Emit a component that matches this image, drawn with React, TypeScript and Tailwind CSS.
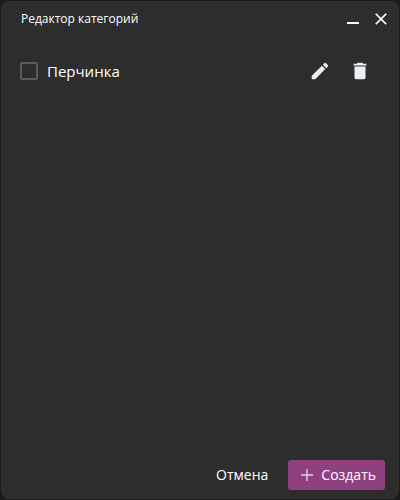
import { useState } from 'react';
import { MdClose, MdDelete, MdEdit } from 'react-icons/md';

const categories = [{ id: 'perchinka', name: 'Перчинка' }];

function TitleBar() {
  return (
    <header className="flex h-9 items-center justify-between pr-2 pl-5">
      <h1 className="text-[12px] leading-4 font-normal">Редактор категорий</h1>
      <div className="flex items-center gap-2">
        <button type="button" aria-label="Свернуть" className="flex h-5 w-5 items-center justify-center pt-2">
          <span className="h-[2px] w-3 bg-white" />
        </button>
        <button type="button" aria-label="Закрыть" className="flex h-5 w-5 items-center justify-center">
          <MdClose size={20} className="shrink-0" />
        </button>
      </div>
    </header>
  );
}

function CategoryRow({ id, name }: { id: string; name: string }) {
  const [checked, setChecked] = useState(false);
  return (
    <li className="flex h-10 items-center">
      <input
        id={id}
        type="checkbox"
        checked={checked}
        onChange={(event) => setChecked(event.target.checked)}
        className="h-[18px] w-[18px] shrink-0 appearance-none rounded-xs border-2 border-[#5a5a5a] checked:bg-[#8e407f]"
      />
      <label htmlFor={id} className="flex-1 pl-[9px] text-[15px] leading-5">
        {name}
      </label>
      <button type="button" aria-label="Изменить" className="flex h-10 w-10 items-center justify-center text-[#eceff1]">
        <MdEdit size={22} />
      </button>
      <button type="button" aria-label="Удалить" className="flex h-10 w-10 items-center justify-center text-[#eceff1]">
        <MdDelete size={22} />
      </button>
    </li>
  );
}

export default function App() {
  return (
    <div className="flex h-screen bg-[#1a1a1a] p-px font-['Open_Sans','Noto_Sans',sans-serif] text-white">
      <main className="flex flex-1 flex-col rounded-lg bg-[#2d2d2d]">
        <TitleBar />
        <ul className="flex-1 pt-[14px] pr-[19px] pl-[19px]">
          {categories.map((category) => (
            <CategoryRow key={category.id} {...category} />
          ))}
        </ul>
        <footer className="flex justify-end gap-2 pr-[14px] pb-[9px]">
          <button type="button" className="h-[30px] px-3 text-[14px] leading-5">
            Отмена
          </button>
          <button
            type="button"
            className="flex h-[30px] items-center gap-2 rounded-[3px] bg-[#8e407f] pr-[9px] pl-[13px] text-[14px] leading-5"
          >
            <svg viewBox="0 0 12 12" className="h-3 w-3" stroke="#e3cfdf" strokeWidth="1.4" aria-hidden="true">
              <path d="M6 0v12M0 6h12" />
            </svg>
            Создать
          </button>
        </footer>
      </main>
    </div>
  );
}
